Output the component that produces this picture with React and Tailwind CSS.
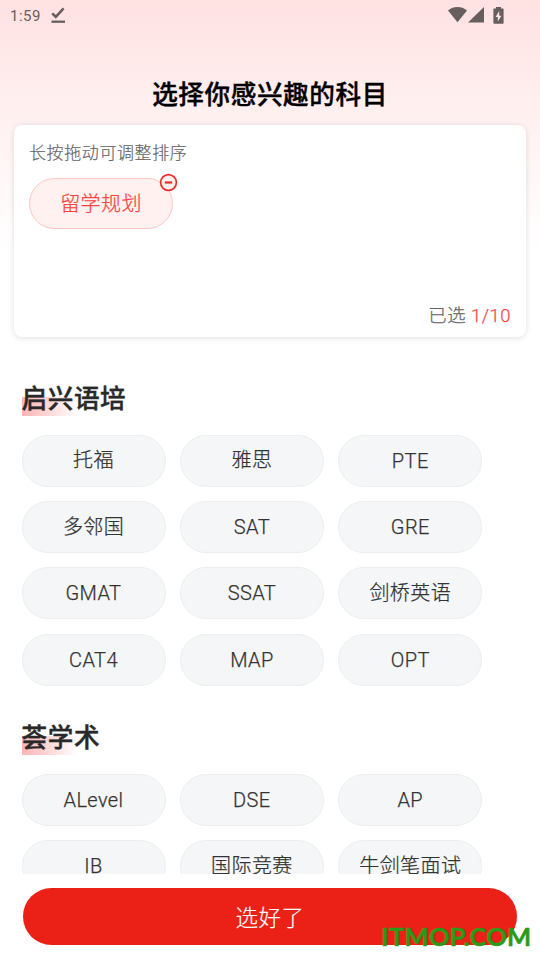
import React from "react";

const SECTIONS = [
  {
    title: "启兴语培",
    items: ["托福", "雅思", "PTE", "多邻国", "SAT", "GRE", "GMAT", "SSAT", "剑桥英语", "CAT4", "MAP", "OPT"],
  },
  { title: "荟学术", items: ["ALevel", "DSE", "AP", "IB", "国际竞赛", "牛剑笔面试"] },
];

function StatusBar() {
  return (
    <header className="flex h-[30px] shrink-0 items-center pl-[10px] pr-[35px] text-[#675e5f]">
      <span className="w-[41px] pt-px text-[15px] leading-[18px] tracking-[0.5px]">1:59</span>
      <svg className="h-4 w-[14px]" viewBox="0 0 14 16" fill="none" stroke="currentColor">
        <path d="M1.2 6.4 4.8 9.8 12.6 1.4" strokeWidth="2.6" />
        <path d="M.5 14.7h13.5" strokeWidth="2.3" />
      </svg>
      <div className="ml-auto flex items-center">
        <svg className="h-4 w-[19px]" viewBox="0 0 19 16" fill="currentColor">
          <path d="M0 3.4C5.4-1.1 13.6-1.1 19 3.4L9.5 15.3Z" />
        </svg>
        <svg className="ml-[1px] h-4 w-4" viewBox="0 0 16 16" fill="currentColor">
          <path d="M16 0v15.6H0Z" />
        </svg>
        <svg className="ml-[9px] mr-px h-[17px] w-[11px]" viewBox="0 0 11 17">
          <path d="M3 0h5v1.4h2q.6 0 .6.6v14q0 .8-.8.8H1.2q-.8 0-.8-.8V2q0-.6.6-.6h2Z" fill="currentColor" />
          <path d="M6.2 4 2.6 10h2.2v4.5L8.4 8.7H6.2Z" fill="#ffe5e6" />
        </svg>
      </div>
    </header>
  );
}

function Section({ title, items }) {
  return (
    <section>
      <h2 className="relative w-max text-[25.6px] leading-[38px] font-medium tracking-[0.6px] text-[#292929] [-webkit-text-stroke:0.4px]">
        <span className="absolute top-[17px] left-0 h-[19px] w-[56px] bg-linear-to-r from-[#ffb4b4] to-white" />
        <span className="relative">{title}</span>
      </h2>
      <div className="mt-[17px] grid grid-cols-[repeat(3,144px)] gap-x-[14.4px] gap-y-[14.3px]">
        {items.map((item) => (
          <button
            key={item}
            className="flex h-[52px] items-center justify-center rounded-full border border-[#eceef0] bg-[#f5f6f8] pb-px text-[20px] font-light tracking-[0.4px] text-[#333] [-webkit-text-stroke:0.25px]"
          >
            <span className={/^[A-Z]/.test(item) ? "pt-px" : ""}>{item}</span>
          </button>
        ))}
      </div>
    </section>
  );
}

export default function App() {
  return (
    <div className="relative flex h-[960px] w-[540px] flex-col overflow-hidden bg-white bg-[linear-gradient(180deg,#ffe1e2_0px,#fff1f1_120px,#ffffff_250px)] font-[Roboto,'Noto_Sans_CJK_SC',sans-serif]">
      <StatusBar />
      <h1 className="mt-[46px] shrink-0 text-center text-[25.6px] leading-[38px] font-medium tracking-[0.6px] text-black [-webkit-text-stroke:0.4px]">
        选择你感兴趣的科目
      </h1>
      <div className="mx-[14px] mt-[11px] flex h-[212px] shrink-0 flex-col rounded-[8px] bg-white px-[15px] shadow-[0_1px_6px_rgba(0,0,0,0.13)]">
        <p className="pt-[16px] text-[17px] leading-[25px] font-light tracking-[0.6px] text-[#666] [-webkit-text-stroke:0.2px]">
          长按拖动可调整排序
        </p>
        <div className="relative mt-[12px] flex h-[51px] w-[144px] items-center justify-center rounded-full border border-[#ffc5c5] bg-[#fff1f0] text-[20px] font-light tracking-[0.4px] text-[#fc443e] [-webkit-text-stroke:0.25px]">
          留学规划
          <svg className="absolute -top-[6px] right-[-6px] h-[19px] w-[19px]" viewBox="0 0 19 19">
            <circle cx="9.5" cy="9.5" r="7.9" fill="#fff0f0" stroke="#ec2d29" strokeWidth="1.7" />
            <path d="M5.8 9.5h7.4" stroke="#ec2d29" strokeWidth="2.2" />
          </svg>
        </div>
        <p className="mt-auto pb-[7px] text-right text-[18.4px] leading-[28px] font-light tracking-[0.5px] text-[#666] [-webkit-text-stroke:0.25px]">
          已选 <span className="text-[#fc443e]">1/10</span>
        </p>
      </div>
      <main className="flex min-h-0 flex-1 flex-col gap-[33.5px] overflow-hidden pt-[42.8px] pl-[21.5px]">
        {SECTIONS.map((s) => (
          <Section key={s.title} {...s} />
        ))}
      </main>
      <footer className="h-[86px] shrink-0 bg-white px-[23px] pt-[14px]">
        <button className="flex h-[57px] w-full items-center justify-center rounded-full bg-[#eb2117] pt-[4px] text-[22.5px] font-light tracking-[0.5px] text-white [-webkit-text-stroke:0.2px]">
          选好了
        </button>
      </footer>
      <span className="absolute right-[8.5px] bottom-[6px] font-[Lato,sans-serif] text-[25.5px] leading-[36px] font-bold tracking-[0.3px] text-[#2b9a16] [-webkit-text-stroke:0.5px]">
        ITMOP.COM
      </span>
    </div>
  );
}
